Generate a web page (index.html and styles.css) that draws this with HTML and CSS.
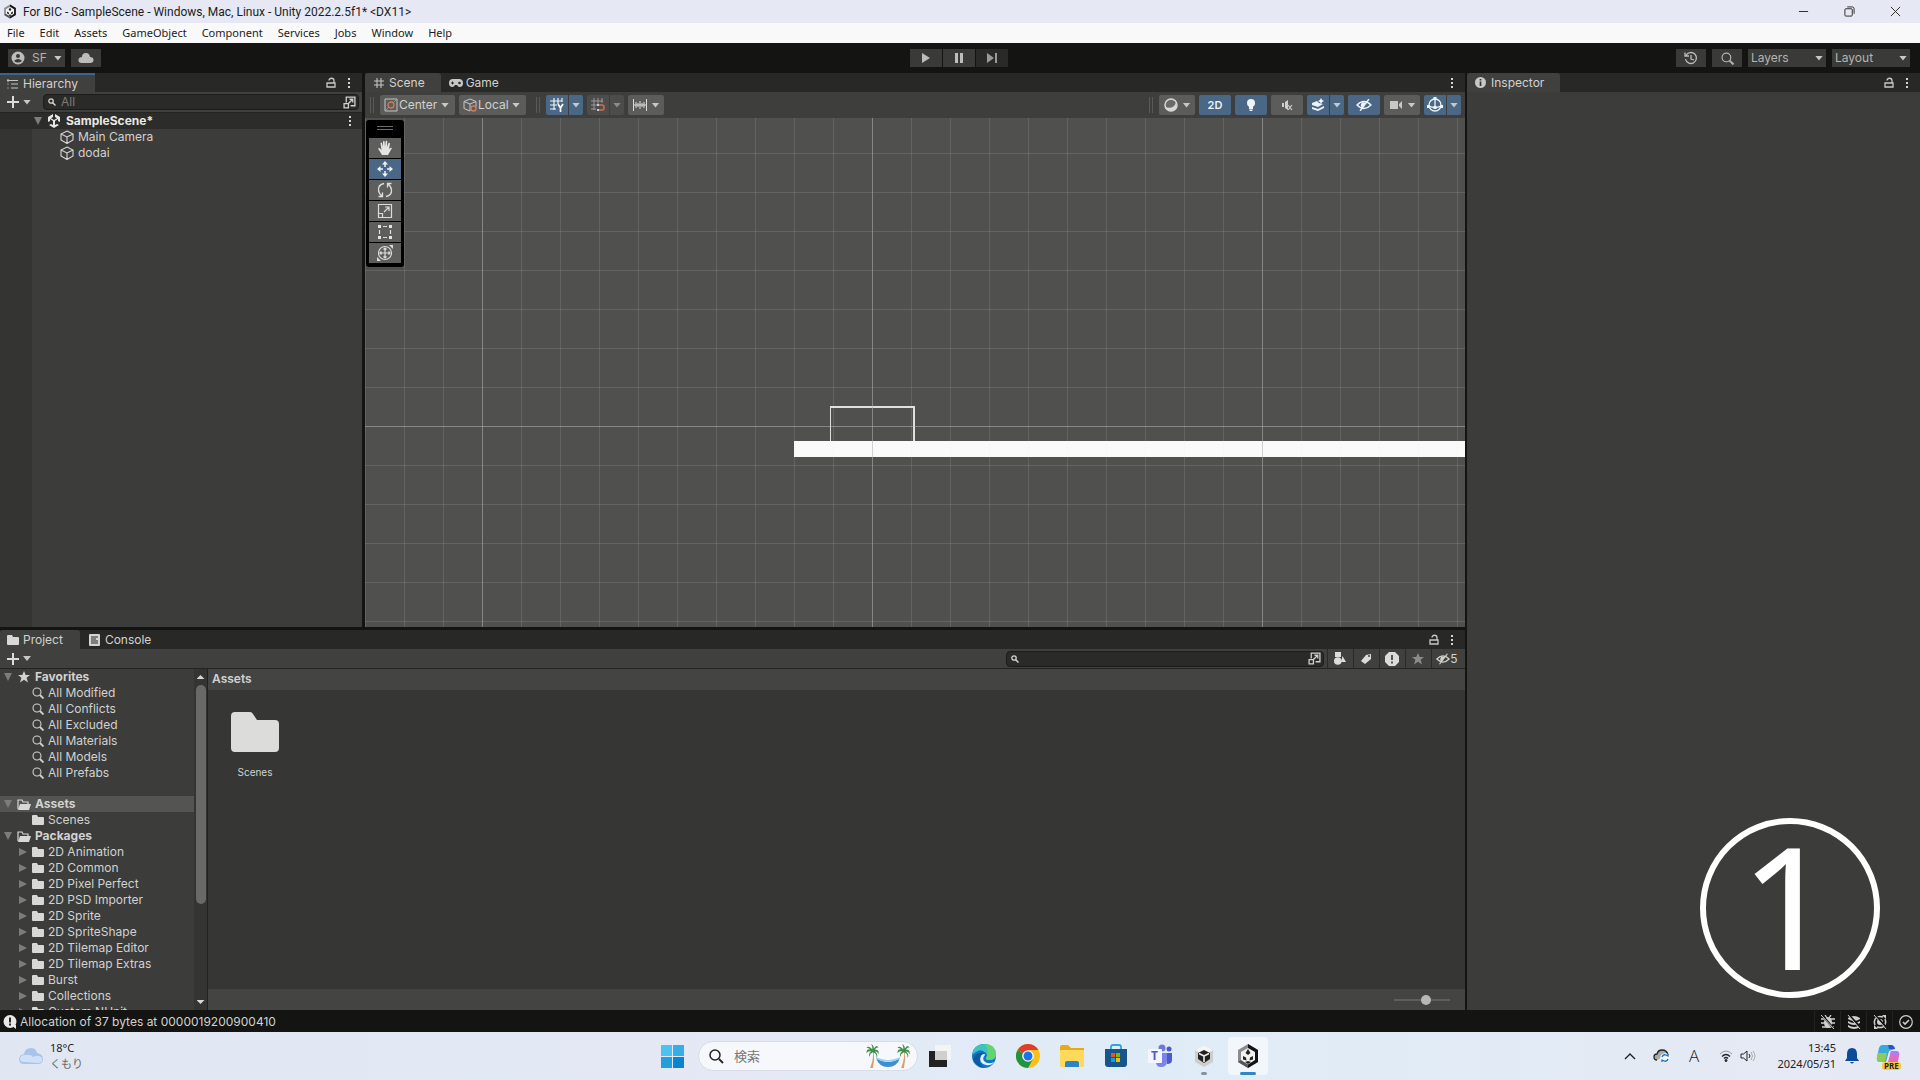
FILE: index.html
```html
<!DOCTYPE html>
<html lang="en">
<head>
  <meta charset="UTF-8">
  <meta name="viewport" content="width=device-width, initial-scale=1.0">
  <title>For BIC - SampleScene - Unity</title>
  <link rel="stylesheet" href="styles.css">
</head>
<body>
  <!-- Shared icons -->
  <svg class="sprite" aria-hidden="true">
    <symbol id="unity" viewBox="0 0 24 24">
      <path d="M12 0 22 6v12l-10 6L2 18V6z" fill="#8c8c8c"/>
      <path d="M12 0 22 6v12l-10 6z" fill="#141414"/>
      <path d="m2 18 3-2 7 4v4z" fill="#555"/>
      <path d="m12 4 7 4v8l-7 4.500L5 16V8z" fill="#f2f2f2"/>
      <path d="m12 5 2.500 4L12 11 9.500 9zM7 15.500V12l3 1.500.5 3zM17 15.500V12l-3 1.500-.5 3z" fill="#222"/>
      <path d="m9 18 3-1 3 1-3 2z" fill="#222"/>
    </symbol>
    <symbol id="unity-scene" viewBox="0 0 14 14">
      <path d="M6 0v3L4 4.200l3 1.800 3-1.800L8 3V0l5 3v5l-2-1V5L8 7v4l2-1 2 1-5 3-5-3 2-1 2 1V7L3 5v2L1 8V3z" fill="#e8e8e8"/>
    </symbol>
    <symbol id="cube" viewBox="0 0 14 14">
      <path d="m7 1 6 3v6l-6 3.500L1 10V4zM1 4l6 3 6-3M7 7v6" fill="none" stroke="#d8d8d8" stroke-width="1.100"/>
    </symbol>
    <symbol id="lock" viewBox="0 0 12 12">
      <path d="M2 6h8v4H2zM4 3.500C4 .5 9 .5 9 3.500V6" fill="none" stroke="#c8c8c8" stroke-width="1.300"/>
    </symbol>
    <symbol id="dots" viewBox="0 0 4 12">
      <path d="M1 1h2v2H1zM1 5h2v2H1zM1 9h2v2H1z" fill="#d4d4d4"/>
    </symbol>
    <symbol id="plus" viewBox="0 0 12 12">
      <path d="M6 0v12M0 6h12" stroke="#dcdcdc" stroke-width="2"/>
    </symbol>
    <symbol id="popout" viewBox="0 0 12 12">
      <path d="M3 6V1h8v8H7M1 7h4v4H1zM5 7l4-4M6 3h3v3" fill="none" stroke="#d0d0d0" stroke-width="1.200"/>
    </symbol>
    <symbol id="search" viewBox="0 0 12 12">
      <circle cx="5" cy="5" r="4" fill="none" stroke="currentColor" stroke-width="1.100"/>
      <path d="m8 8 3.500 3.500" stroke="currentColor" stroke-width="1.800"/>
    </symbol>
    <symbol id="search-bold" viewBox="0 0 8 8">
      <circle cx="3" cy="3" r="2.200" fill="none" stroke="currentColor" stroke-width="1.300"/>
      <path d="m4.500 4.500 3 3" stroke="currentColor" stroke-width="1.500"/>
    </symbol>
    <symbol id="folder" viewBox="0 0 12 10">
      <path d="M0 1q0-1 1-1h4l1 2h5q1 0 1 1v6q0 1-1 1H1q-1 0-1-1z" fill="#d8d8d6"/>
    </symbol>
    <symbol id="folder-open" viewBox="0 0 14 11">
      <path d="M1 10V1h4l1 2h5v2" fill="none" stroke="#d8d8d6" stroke-width="1.200"/>
      <path d="M3 5h11l-2 6H1z" fill="#d8d8d6"/>
    </symbol>
    <symbol id="star" viewBox="0 0 12 12">
      <path d="m6 0 1.700 4H12L8.600 6.800 10 11.500 6 8.800 2 11.500l1.400-4.700L0 4h4.300z" fill="currentColor"/>
    </symbol>
    <symbol id="eye-off" viewBox="0 0 16 12">
      <path d="M1 6q7-7 14 0-7 7-14 0z" fill="none" stroke="currentColor" stroke-width="1.400"/>
      <path d="M5 5q1-3 5-1L6 9Q4 7 5 5z" fill="currentColor"/>
      <path d="M13 0 4 12" stroke="currentColor" stroke-width="1.400"/>
    </symbol>
    <symbol id="palm" viewBox="0 0 14 28">
      <path d="M8 9q1 8-3 18h3q2-8 1-18z" fill="#d9a066"/>
      <path d="M8 8Q4 2 1 5q3 0 4 2-4-1-4 4 2-3 5-2-3 2-2 6 1-4 4-5 4 1 4 6 2-4-2-7 3 0 4 3 1-5-4-5 2-3 4-2-2-4-5 1 0-4-3-5 2 3 1 7z" fill="#3f8f4a"/>
    </symbol>
  </svg>

  <header class="titlebar">
    <svg class="app-icon"><use href="#unity"/></svg>
    <h1 class="title">For BIC - SampleScene - Windows, Mac, Linux - Unity 2022.2.5f1* &lt;DX11&gt;</h1>
    <div class="window-buttons">
      <button aria-label="Minimize"><svg viewBox="0 0 12 12"><path d="M1 6h10"/></svg></button>
      <button aria-label="Restore"><svg viewBox="0 0 12 12"><rect x="1" y="3" width="8" height="8" rx="1"/><path d="M3.500 1H9q2 0 2 2v5.500"/></svg></button>
      <button aria-label="Close"><svg viewBox="0 0 12 12"><path d="m1 1 10 10M11 1 1 11"/></svg></button>
    </div>
  </header>

  <nav class="menubar">
    <button>File</button>
    <button>Edit</button>
    <button>Assets</button>
    <button>GameObject</button>
    <button>Component</button>
    <button>Services</button>
    <button>Jobs</button>
    <button>Window</button>
    <button>Help</button>
  </nav>

  <div class="toolbar">
    <div class="toolbar-side">
      <button class="tb-btn account">
        <svg width="14" height="14" viewBox="0 0 14 14"><circle cx="7" cy="7" r="6.500" fill="#bdbdbd"/><circle cx="7" cy="5" r="2" fill="#3a3a38"/><path d="M3 10q4-4 8 0-4 3-8 0z" fill="#3a3a38"/></svg>
        SF
        <i class="caret"></i>
      </button>
      <button class="tb-btn" aria-label="Cloud">
        <svg width="16" height="12" viewBox="0 0 16 12"><path d="M4 11Q0 11 .5 7.500 1 5 4 5q0-4 4-4 3.500 0 4 4 3.500 0 3.500 3T12 11z" fill="#bdbdbd"/></svg>
      </button>
    </div>
    <div class="play-controls">
      <button aria-label="Play"><svg width="12" height="12" viewBox="0 0 12 12"><path d="M2 1v10l8-5z" fill="#bdbdbd"/></svg></button>
      <button aria-label="Pause"><svg width="12" height="12" viewBox="0 0 12 12"><path d="M2 1h3v10H2zM7 1h3v10H7z" fill="#bdbdbd"/></svg></button>
      <button class="dim" aria-label="Step"><svg width="12" height="12" viewBox="0 0 12 12"><path d="M1 1v10l7-5zM9 1h2v10H9z" fill="#9a9a9a"/></svg></button>
    </div>
    <div class="toolbar-side end">
      <button class="tb-btn" aria-label="Undo history">
        <svg width="14" height="14" viewBox="0 0 14 14" fill="none" stroke="#bdbdbd" stroke-width="1.300"><path d="M2 4.500A5.500 5.500 0 1 1 1.500 8M1 1.500V5h4M7 4v4l3 1"/></svg>
      </button>
      <button class="tb-btn" aria-label="Search"><svg width="13" height="13"><use href="#search"/></svg></button>
      <label class="select tb-select"><select aria-label="Layers"><option>Layers</option></select><i class="caret"></i></label>
      <label class="select tb-select"><select aria-label="Layout"><option>Layout</option></select><i class="caret"></i></label>
    </div>
  </div>

  <main class="editor">
    <div class="left-dock">

      <section class="panel hierarchy">
        <div class="tabs">
          <button class="tab active focused">
            <svg width="12" height="10" viewBox="0 0 12 10"><path d="M1 0v3M0 1.500h11M4 5h7M4 9h7M1 4.500v1M1 8.500v1" stroke="#c4c4c4" stroke-width="1.100" fill="none"/></svg>
            Hierarchy
          </button>
          <div class="tab-tools">
            <svg width="12" height="12"><use href="#lock"/></svg>
            <svg width="4" height="12"><use href="#dots"/></svg>
          </div>
        </div>
        <div class="bar">
          <button class="add" aria-label="Create"><svg width="12" height="12"><use href="#plus"/></svg><i class="caret"></i></button>
          <label class="search-box wide">
            <svg width="8" height="8"><use href="#search-bold"/></svg>
            <input type="text" placeholder="All" aria-label="Search hierarchy">
            <svg width="13" height="13"><use href="#popout"/></svg>
          </label>
        </div>
        <div class="scene-tree">
          <div class="row scene-row">
            <i class="fold open"></i>
            <svg width="14" height="14"><use href="#unity-scene"/></svg>
            <b>SampleScene*</b>
            <svg class="push" width="4" height="12"><use href="#dots"/></svg>
          </div>
          <div class="objects">
            <div class="row"><svg width="14" height="14"><use href="#cube"/></svg>Main Camera</div>
            <div class="row"><svg width="14" height="14"><use href="#cube"/></svg>dodai</div>
          </div>
        </div>
      </section>

      <section class="panel scene">
        <div class="tabs">
          <button class="tab active">
            <svg width="12" height="12" viewBox="0 0 12 12"><path d="M4 1v10M8 1v10M1 4h10M1 8h10" stroke="#c4c4c4" stroke-width="1.100"/></svg>
            Scene
          </button>
          <button class="tab">
            <svg width="14" height="8" viewBox="0 0 14 8"><path d="M4 0h6q4 0 4 4t-3.500 4Q9 8 8 6H6Q5 8 3.500 8 0 8 0 4t4-4z" fill="#c8c8c8"/><path d="M2 4h3M3.500 2.500v3" stroke="#282826"/><circle cx="10.500" cy="4" r="1.300" fill="#282826"/></svg>
            Game
          </button>
          <div class="tab-tools"><svg width="4" height="12"><use href="#dots"/></svg></div>
        </div>
        <div class="scene-bar">
          <i class="grip"></i>
          <label class="select tool-select">
            <svg width="14" height="14" viewBox="0 0 14 14" fill="none"><path d="M1 1h12v12H1z" stroke="#c4c4c4"/><circle cx="7" cy="7" r="3" stroke="#d07a5c" stroke-width="1.300"/><path d="m2 12 3-3M9 5l3-3" stroke="#d07a5c"/></svg>
            <select aria-label="Pivot"><option>Center</option></select><i class="caret"></i>
          </label>
          <label class="select tool-select">
            <svg width="14" height="14" viewBox="0 0 14 14" fill="none"><path d="m7 1 6 2.500V9M7 13 1 10.500v-7L7 1M1 3.500 7 6l6-2.500M7 6v7" stroke="#c8c8c8"/><circle cx="10.500" cy="10.500" r="2.500" stroke="#d07a5c" stroke-width="1.400"/></svg>
            <select aria-label="Orientation"><option>Local</option></select><i class="caret"></i>
          </label>
          <i class="grip later"></i>
          <div class="split on">
            <button aria-label="Grid"><svg width="14" height="14" viewBox="0 0 14 14"><path d="M4 0v12M8 0v6M0 3h12M0 7h7M0 11h6M12 0v4" stroke="#eef3f8" stroke-width="1.200"/><path d="m8 6 2.500 4L13 6M10.500 9v5" stroke="#fff" stroke-width="1.700" fill="none"/></svg></button>
            <button aria-label="Grid options"><i class="caret"></i></button>
          </div>
          <div class="split off">
            <button aria-label="Snap"><svg width="14" height="14" viewBox="0 0 14 14"><path d="M3 0v12M7 0v6M11 0v5M0 3h12M0 7h6M0 11h5" stroke="#999"/><path d="M8 7h3q2 0 2 2.500T11 12H8" stroke="#b5664e" stroke-width="2" fill="none"/><path d="M6 6h2v2H6zM6 11h2v2H6z" fill="#ccc"/></svg></button>
            <button aria-label="Snap options"><i class="caret"></i></button>
          </div>
          <button class="tool" aria-label="Snap increment">
            <svg width="14" height="14" viewBox="0 0 14 14"><path d="M.5 1v12M13.500 1v12M3 4v6M5 5v4M7 3v8M9 5v4M11 4v6M0 7h14" stroke="#dadada"/></svg>
            <i class="caret"></i>
          </button>

          <i class="grip push"></i>
          <button class="tool" aria-label="Draw mode">
            <svg width="14" height="14" viewBox="0 0 14 14"><circle cx="7" cy="7" r="6" fill="#6a6a68" stroke="#d8d8d8" stroke-width="1.500"/><path d="M12 4q2 8-5 9-4 0-6-4 9 3 11-5z" fill="#d8d8d8"/></svg>
            <i class="caret"></i>
          </button>
          <button class="tool square on">2D</button>
          <button class="tool square on" aria-label="Lighting"><svg width="12" height="14" viewBox="0 0 12 14"><circle cx="6" cy="5" r="4" fill="#eef3f8"/><path d="M4 8h4v3H4zM4.500 11.500h3V13h-3z" fill="#eef3f8"/></svg></button>
          <button class="tool square" aria-label="Audio"><svg width="14" height="12" viewBox="0 0 14 12"><path d="M2 4h2v4H2zM5 3l3-2v10L5 9z" fill="#d0d0d0"/><path d="m8 6 4 5M12 6l-4 5" stroke="#d0d0d0" stroke-width="1.200"/></svg></button>
          <div class="split on">
            <button aria-label="Effects"><svg width="14" height="14" viewBox="0 0 14 14"><path d="m1 5 5-2 2 2 4 1-5 3-6-2zM1 9l6 2 6-3v2l-6 3-6-2z" fill="#eef3f8"/><path d="m10 0 1 2 2 1-2 1-1 2-1-2-2-1 2-1z" fill="#fff"/></svg></button>
            <button aria-label="Effects options"><i class="caret"></i></button>
          </div>
          <button class="tool square on" aria-label="Scene visibility"><svg width="16" height="12"><use href="#eye-off"/></svg></button>
          <button class="tool" aria-label="Camera"><svg width="14" height="10" viewBox="0 0 14 10"><path d="M1 1h8v8H1zM10 4l3-3v8l-3-3z" fill="#c8c8c8"/></svg><i class="caret"></i></button>
          <div class="split on">
            <button aria-label="Gizmos"><svg width="16" height="16" viewBox="0 0 16 16" fill="none" stroke="#eef3f8" stroke-width="1.300"><circle cx="8" cy="8" r="6"/><path d="M8 1v9M2 9q6 3 12 0"/><path d="M6.500 0h3v3h-3zM0 8h3v3H0zM13 8h3v3h-3zM6.500 9h3v3h-3z" fill="#eef3f8" stroke="none"/></svg></button>
            <button aria-label="Gizmos options"><i class="caret"></i></button>
          </div>
        </div>

        <div class="canvas">
          <div class="camera-frame"></div>
          <div class="ground"></div>
          <div class="tools">
            <i class="tools-grip"></i>
            <button aria-label="View"><svg width="16" height="16" viewBox="0 0 16 16"><path d="M5 15 1 8.500q1-1 2 0l1.500 1.500L3.500 3Q4.500 2 5 3l1 4V1.500q1-1 1.600 0L8 7l.7-6q1-.8 1.500.3L10 7l1.500-4q1-.5 1.500.5L12 9q2-2 3-1l-4 7z" fill="#e4e4e4"/></svg></button>
            <button class="on" aria-label="Move"><svg width="16" height="16" viewBox="0 0 16 16"><path d="M8 2v4M8 10v4M2 8h4M10 8h4" stroke="#eef3f8" stroke-width="1.500"/><path d="m8 0 3 3.500H5zM8 16l3-3.500H5zM0 8l3.500-3v6zM16 8l-3.500-3v6z" fill="#eef3f8"/></svg></button>
            <button aria-label="Rotate"><svg width="16" height="16" viewBox="0 0 16 16" fill="none" stroke="#dcdcdc" stroke-width="1.300"><path d="M7 1.500Q1 3 1.500 8q0 3 3.500 6M9 14.500q6-1.500 5.500-6.500 0-3-3.500-6M1.500 14.500H5.500v-4M14.500 1.500h-4v4"/></svg></button>
            <button aria-label="Scale"><svg width="16" height="16" viewBox="0 0 16 16" fill="none" stroke="#dcdcdc" stroke-width="1.200"><path d="M1.500 1.500h13v13h-13zM1.500 10.500h4v4M7 9l5-5M8 4h4v4"/></svg></button>
            <button aria-label="Rect"><svg width="16" height="16" viewBox="0 0 16 16"><path d="M2.500 6v4M13.500 6v4M6 2.500h4M6 13.500h4" stroke="#dcdcdc" stroke-width="1.200"/><path d="M1 1h3v3H1zM12 1h3v3h-3zM1 12h3v3H1zM12 12h3v3h-3z" fill="#e4e4e4"/></svg></button>
            <button aria-label="Transform"><svg width="16" height="16" viewBox="0 0 16 16" fill="none" stroke="#dcdcdc" stroke-width="1.200"><circle cx="8" cy="8" r="6.500"/><path d="M8 3v10M3 8h10M6.500 4.500 8 3l1.500 1.500M6.500 11.500 8 13l1.500-1.500M4.500 6.500 3 8l1.500 1.500M11.500 6.500 13 8l-1.500 1.500"/><path d="M12 0h4v4zM0 12v4h4z" fill="#dcdcdc" stroke="none"/></svg></button>
          </div>
        </div>
      </section>

      <section class="panel project">
        <div class="tabs">
          <button class="tab active"><svg width="12" height="10"><use href="#folder"/></svg>Project</button>
          <button class="tab">
            <svg width="11" height="12" viewBox="0 0 11 12"><rect width="11" height="12" rx="1" fill="#d4d4d4"/><path d="M2 3h7M2 5h5M2 7h7M2 9h7" stroke="#282826"/></svg>
            Console
          </button>
          <div class="tab-tools">
            <svg width="12" height="12"><use href="#lock"/></svg>
            <svg width="4" height="12"><use href="#dots"/></svg>
          </div>
        </div>
        <div class="bar project-bar">
          <button class="add" aria-label="Create asset"><svg width="12" height="12"><use href="#plus"/></svg><i class="caret"></i></button>
          <label class="search-box push">
            <svg width="8" height="8"><use href="#search-bold"/></svg>
            <input type="text" aria-label="Search assets">
            <svg width="13" height="13"><use href="#popout"/></svg>
          </label>
          <div class="filters">
            <button aria-label="Search by type"><svg width="12" height="13" viewBox="0 0 12 13"><path d="M1 0h6v5H1zM8.500 4 12 10H7z" fill="#dcdcdc"/><circle cx="3.800" cy="9" r="3.800" fill="#dcdcdc"/></svg></button>
            <button aria-label="Search by label"><svg width="12" height="12" viewBox="0 0 12 12"><path d="m1 8 5-6 5-1v5l-6 5z" fill="#dcdcdc"/><circle cx="9" cy="3" r="1" fill="#444442"/></svg></button>
            <button aria-label="Import log"><svg width="14" height="14" viewBox="0 0 14 14"><path d="M4 0h6l4 4v6l-4 4H4l-4-4V4z" fill="#dcdcdc"/><path d="M7 3v5M7 9.500v2" stroke="#333" stroke-width="1.600"/></svg></button>
            <button class="star" aria-label="Save search"><svg width="12" height="12"><use href="#star"/></svg></button>
            <button class="hidden-count" aria-label="Hidden packages"><svg width="14" height="12"><use href="#eye-off"/></svg>5</button>
          </div>
        </div>
        <div class="project-body">
          <div class="folders">
            <div class="row"><i class="fold open"></i><svg class="fav" width="12" height="12"><use href="#star"/></svg><b>Favorites</b></div>
            <div class="row sub"><svg width="12" height="12"><use href="#search"/></svg>All Modified</div>
            <div class="row sub"><svg width="12" height="12"><use href="#search"/></svg>All Conflicts</div>
            <div class="row sub"><svg width="12" height="12"><use href="#search"/></svg>All Excluded</div>
            <div class="row sub"><svg width="12" height="12"><use href="#search"/></svg>All Materials</div>
            <div class="row sub"><svg width="12" height="12"><use href="#search"/></svg>All Models</div>
            <div class="row sub"><svg width="12" height="12"><use href="#search"/></svg>All Prefabs</div>
            <div class="row spacer"></div>
            <div class="row selected"><i class="fold open"></i><svg width="14" height="11"><use href="#folder-open"/></svg><b>Assets</b></div>
            <div class="row sub"><svg width="12" height="10"><use href="#folder"/></svg>Scenes</div>
            <div class="row"><i class="fold open"></i><svg width="14" height="11"><use href="#folder-open"/></svg><b>Packages</b></div>
            <div class="row pkg"><i class="fold"></i><svg width="12" height="10"><use href="#folder"/></svg>2D Animation</div>
            <div class="row pkg"><i class="fold"></i><svg width="12" height="10"><use href="#folder"/></svg>2D Common</div>
            <div class="row pkg"><i class="fold"></i><svg width="12" height="10"><use href="#folder"/></svg>2D Pixel Perfect</div>
            <div class="row pkg"><i class="fold"></i><svg width="12" height="10"><use href="#folder"/></svg>2D PSD Importer</div>
            <div class="row pkg"><i class="fold"></i><svg width="12" height="10"><use href="#folder"/></svg>2D Sprite</div>
            <div class="row pkg"><i class="fold"></i><svg width="12" height="10"><use href="#folder"/></svg>2D SpriteShape</div>
            <div class="row pkg"><i class="fold"></i><svg width="12" height="10"><use href="#folder"/></svg>2D Tilemap Editor</div>
            <div class="row pkg"><i class="fold"></i><svg width="12" height="10"><use href="#folder"/></svg>2D Tilemap Extras</div>
            <div class="row pkg"><i class="fold"></i><svg width="12" height="10"><use href="#folder"/></svg>Burst</div>
            <div class="row pkg"><i class="fold"></i><svg width="12" height="10"><use href="#folder"/></svg>Collections</div>
            <div class="row pkg"><i class="fold"></i><svg width="12" height="10"><use href="#folder"/></svg>Custom NUnit</div>
          </div>
          <div class="scrollbar">
            <i class="arrow up"></i>
            <div class="track"><div class="thumb"></div></div>
            <i class="arrow"></i>
          </div>
          <div class="assets">
            <div class="breadcrumb">Assets</div>
            <div class="grid">
              <div class="asset">
                <svg width="48" height="40" viewBox="0 0 48 40"><path d="M0 4q0-4 4-4h15q2 0 3 2l4 6h18q4 0 4 4v24q0 4-4 4H4q-4 0-4-4z" fill="#dcdcda"/></svg>
                <span>Scenes</span>
              </div>
            </div>
            <div class="zoom-bar"><input type="range" class="zoom" min="0" max="100" value="58" aria-label="Icon size"></div>
          </div>
        </div>
      </section>
    </div>

    <section class="panel inspector">
      <div class="tabs">
        <button class="tab active">
          <svg width="11" height="11" viewBox="0 0 11 11"><circle cx="5.500" cy="5.500" r="5.500" fill="#c8c8c8"/><path d="M5.500 2v1.500M5.500 4.500V9" stroke="#333" stroke-width="1.700"/></svg>
          Inspector
        </button>
        <div class="tab-tools">
          <svg width="12" height="12"><use href="#lock"/></svg>
          <svg width="4" height="12"><use href="#dots"/></svg>
        </div>
      </div>
      <div class="step-number">1</div>
    </section>
  </main>

  <div class="status">
    <svg width="14" height="14" viewBox="0 0 14 14"><circle cx="7" cy="6.500" r="6.500" fill="#e8e8e8"/><path d="M8 10h5v4z" fill="#e8e8e8"/><path d="M7 2.500v5M7 8.500v2" stroke="#141412" stroke-width="1.800"/></svg>
    <span>Allocation of 37 bytes at 0000019200900410</span>
    <div class="status-icons">
      <button aria-label="Debugger"><svg width="14" height="14" viewBox="0 0 14 14"><ellipse cx="7" cy="7.500" rx="4" ry="5.500" fill="#cfcfcf"/><path d="M0 4h14M0 8h14M1 12h12M4 0l2 3M10 0 8 3" stroke="#cfcfcf" stroke-width="1.300"/><path d="m1 0 12 14" stroke="#141412" stroke-width="2"/><path d="m0 0 13 14" stroke="#cfcfcf"/></svg></button>
      <button aria-label="Cache server"><svg width="14" height="14" viewBox="0 0 14 14"><path d="M1 3q6-4 12 0v1q-6 4-12 0zM1 6q6 4 12 0v2q-6 4-12 0zM1 10q6 4 12 0v2q-6 4-12 0z" fill="#cfcfcf"/><path d="m2 0 12 13" stroke="#141412" stroke-width="2"/><path d="m1 0 12 14" stroke="#cfcfcf"/></svg></button>
      <button aria-label="Auto refresh"><svg width="14" height="14" viewBox="0 0 14 14"><path d="M2 10Q0 5 4 2q3-1 6 0M12 4q2 5-2 8-3 1-6 0" fill="none" stroke="#cfcfcf" stroke-width="1.500"/><path d="M9 0h4v4zM1 10v4h4z" fill="#cfcfcf"/><circle cx="7" cy="7" r="3" fill="#cfcfcf"/><path d="m2 0 12 13" stroke="#141412" stroke-width="2"/><path d="m1 0 12 14" stroke="#cfcfcf"/></svg></button>
      <button aria-label="Progress"><svg width="14" height="14" viewBox="0 0 14 14" fill="none" stroke="#cfcfcf" stroke-width="1.200"><circle cx="7" cy="7" r="6.300"/><path d="m4 7 2 2 4-4" stroke-width="1.600"/></svg></button>
    </div>
  </div>

  <footer class="taskbar">
    <button class="weather">
      <svg width="26" height="18" viewBox="0 0 26 18"><path d="M6 17q-5 0-5-5 0-4 5-5 1-6 7-6 5 0 6 5 6 1 6 6t-5 5z" fill="#a9c4ea"/><path d="M6 15q-4 0-4-3.500T7 8q6-1 8 2 6-3 9 1 1 5-4 5z" fill="#cfe0f7"/></svg>
      <span>18°C<small>くもり</small></span>
    </button>

    <div class="apps">
      <button aria-label="Start"><svg width="23" height="23" viewBox="0 0 23 23"><path d="M0 0h11v11H0z" fill="#4cc2f1"/><path d="M12 0h11v11H12z" fill="#35aee8"/><path d="M0 12h11v11H0z" fill="#219fdf"/><path d="M12 12h11v11H12z" fill="#0b84cf"/></svg></button>
      <label class="task-search">
        <svg width="15" height="15" viewBox="0 0 15 15"><circle cx="6" cy="6" r="5" fill="none" stroke="#222" stroke-width="1.500"/><path d="m10 10 4 4" stroke="#222" stroke-width="1.800"/></svg>
        <input type="text" placeholder="検索" aria-label="検索">
        <svg width="46" height="26" viewBox="0 0 46 26"><use href="#palm" width="14" height="26"/><use href="#palm" x="31" width="14" height="26"/><path d="M11 15q12 8 24 0-3 9-12 9t-12-9z" fill="#3d8fcf"/><path d="M11 15q12 6 24 0" fill="none" stroke="#9fd0f0" stroke-width="1.500"/></svg>
      </label>
      <button aria-label="Task view"><svg width="24" height="24" viewBox="0 0 24 24"><path d="M1 7h18v16H1z" fill="#222"/><path d="M7 1h16v15H7z" fill="#f4f4f4"/><path d="M7 7h12v9H7z" fill="#cfcfcf"/></svg></button>
      <button aria-label="Edge"><svg width="24" height="24" viewBox="0 0 24 24"><circle cx="12" cy="12" r="12" fill="#1473c4"/><path d="M0 11Q2 0 12 0q11 0 12 10 0 6-7 6-3 0-3-2 2-2 0-5-5-5-10-1-3 2-4 3z" fill="#3cc5c0"/><path d="M13 0q10 0 11 10 0 6-7 6-3 0-3-2 4-7-1-14z" fill="#62d470"/><path d="M9 11q-3 8 5 10 5 1 8-3-6 3-10-1-2-3 1-6 0-2-4 0z" fill="#dff2ff"/><path d="M1 15q3 8 11 9-5-4-4-10 1-4 5-5-8-2-12 6z" fill="#0c59a4"/></svg></button>
      <button aria-label="Chrome"><svg width="24" height="24" viewBox="0 0 24 24"><circle cx="12" cy="12" r="12" fill="#fbc116"/><path d="M12 12 1.600 6A12 12 0 0 1 22.400 6H12z" fill="#e33b2e"/><path d="M12 12 1.600 6A12 12 0 0 0 12 24l5-9z" fill="#229342"/><circle cx="12" cy="12" r="5.800" fill="#fff"/><circle cx="12" cy="12" r="4.500" fill="#1a73e8"/></svg></button>
      <button aria-label="Explorer"><svg width="24" height="22" viewBox="0 0 24 22"><path d="M0 2q0-2 2-2h6l3 3h13v18H0z" fill="#e8a91c"/><path d="M1 5h22q1 0 1 1v14q0 2-2 2H2q-2 0-2-2V6z" fill="#ffd95c"/><path d="M5 22v-4q0-2 2-2h10q2 0 2 2v4z" fill="#2c83cc"/></svg></button>
      <button aria-label="Store"><svg width="24" height="24" viewBox="0 0 24 24"><path d="M7 6V3q0-2 2-2h6q2 0 2 2v3" fill="none" stroke="#2aa7dd" stroke-width="1.800"/><path d="M1 5h22v15q0 3-3 3H4q-3 0-3-3z" fill="#17558c"/><path d="M7 9h4v4H7z" fill="#f25022"/><path d="M12 9h4v4h-4z" fill="#7fba00"/><path d="M7 14h4v4H7z" fill="#00a4ef"/><path d="M12 14h4v4h-4z" fill="#ffb900"/></svg></button>
      <button aria-label="Teams"><svg width="24" height="24" viewBox="0 0 24 24"><circle cx="14" cy="4" r="3.500" fill="#6f78d6"/><circle cx="21" cy="5" r="2.500" fill="#5059c9"/><path d="M9 9h10v8q0 6-6 6-5 0-5-5z" fill="#7b83eb"/><path d="M19 9h5v7q0 4-5 4z" fill="#5059c9"/><rect y="5" width="14" height="14" rx="1" fill="#f4f5ff"/><text x="3" y="16" class="teams-t">T</text></svg></button>
      <button class="running" aria-label="Unity Hub"><svg width="24" height="24" viewBox="0 0 24 24"><path d="m12 1 9 5v12l-9 5-9-5V6z" fill="#cdcdcd"/><path d="m12 1 9 5-9 6-9-6z" fill="#f4f4f4"/><path d="m12 6 6 3v6l-6 4-6-4V9z" fill="#222"/><path d="m12 12-5-2.500M12 12l5-2.500M12 12v6" stroke="#eee" stroke-width="1.600"/></svg></button>
      <button class="running active" aria-label="Unity"><svg width="24" height="24"><use href="#unity"/></svg></button>
    </div>

    <div class="tray">
      <button aria-label="Show hidden icons"><svg width="12" height="8" viewBox="0 0 12 8"><path d="m1 7 5-5 5 5" fill="none" stroke="#222" stroke-width="1.400"/></svg></button>
      <button aria-label="OneDrive"><svg width="18" height="14" viewBox="0 0 18 14"><path d="M4 11Q1 11 1 8q0-3 3-3 1-4 5-4 5 0 6 5" fill="#aaa" stroke="#222" stroke-width="1.300"/><circle cx="12" cy="9" r="4.800" fill="#f2f5fa"/><path d="M9 8q1-3 4-2l2 1V5M15 10q-1 3-4 2l-2-1v2" fill="none" stroke="#1473c4" stroke-width="1.300"/></svg></button>
      <button class="ime">A</button>
      <button class="net" aria-label="Network and volume">
        <svg width="14" height="12" viewBox="0 0 14 12" fill="none" stroke="#222"><path d="M1 4q6-6 12 0" stroke="#999"/><path d="M3 6.500q4-4 8 0M5 8.500q2-2 4 0" stroke-width="1.300"/><circle cx="7" cy="10.500" r="1" fill="#222"/></svg>
        <svg width="16" height="12" viewBox="0 0 16 12" fill="none" stroke="#222"><path d="M1 4h2.500L7 1v10L3.500 8H1zM9 4q2 2 0 4"/><path d="M11 2q3 4 0 8M13 1q4 5 0 10" stroke="#aaa"/></svg>
      </button>
      <button class="clock">13:45<br>2024/05/31</button>
      <button aria-label="Notifications"><svg width="14" height="16" viewBox="0 0 14 16"><path d="M7 0q5 0 5 6v4l2 3H0l2-3V6q0-6 5-6zM5 14h4q-2 3-4 0z" fill="#0b4a9c"/></svg></button>
      <button class="copilot" aria-label="Copilot">
        <svg width="24" height="24" viewBox="0 0 24 24"><path d="M6 1h9q3 0 4 4l-6 2-3 11H4Q0 18 1 13L3 4q1-3 3-3z" fill="#3aa9d8"/><path d="M2 9h9l-2 9H4q-4 0-3-5z" fill="#8ecb5a"/><path d="M12 1h3q3 0 4 4h-6z" fill="#2a55c8"/><path d="M15 7h5q4 0 3 5l-1 5q-1 4-4 4H9l3-3z" fill="#e56bc0"/><path d="M15 7h5q4 0 3 5h-9z" fill="#b57bf0"/></svg>
        <span class="badge">PRE</span>
      </button>
    </div>
  </footer>
</body>
</html>
```
FILE: styles.css
```css
/* Base */
* {
  box-sizing: border-box;
}

body {
  margin: 0;
  height: 100vh;
  display: flex;
  flex-direction: column;
  overflow: hidden;
  background: #141412;
  color: #d2d2d0;
  font-family: Inter, "Noto Sans CJK JP", sans-serif;
  font-size: 12px;
  line-height: 16px;
}

button,
input,
select {
  margin: 0;
  padding: 0;
  border: 0;
  background: none;
  color: inherit;
  font: inherit;
}

button {
  display: flex;
  align-items: center;
  justify-content: center;
}

input:focus,
select:focus {
  outline: none;
}

svg {
  flex: none;
  display: block;
}

.sprite {
  position: absolute;
  width: 0;
  height: 0;
}

.push {
  margin-left: auto;
}

/* Triangles */
.caret {
  flex: none;
  width: 8px;
  height: 5px;
  background: #c8c8c8;
  clip-path: polygon(0 0, 100% 0, 50% 100%);
}

.fold {
  flex: none;
  width: 8px;
  height: 8px;
  background: #7c7c7a;
  clip-path: polygon(0 0, 100% 50%, 0 100%);
}

.fold.open {
  clip-path: polygon(0 0, 100% 0, 50% 100%);
}

/* Title bar and menu */
.titlebar {
  flex: none;
  display: flex;
  align-items: center;
  height: 23px;
  padding: 0 2px 0 3px;
  background: #e6e9f3;
  color: #1c1c1c;
}

.app-icon {
  width: 14px;
  height: 15px;
}

.title {
  margin: 0 0 0 6px;
  font-family: Roboto, sans-serif;
  font-size: 12px;
  font-weight: 400;
}

.window-buttons {
  display: flex;
  margin-left: auto;
}

.window-buttons button {
  width: 46px;
  height: 20px;
}

.window-buttons svg {
  width: 11px;
  height: 11px;
  fill: none;
  stroke: #222;
}

.menubar {
  flex: none;
  display: flex;
  gap: 1px;
  height: 20px;
  background: #f9f9f9;
  color: #1c1c1c;
  font-family: "Noto Sans", sans-serif;
  font-size: 11px;
}

.menubar button {
  padding: 0 7px;
}

/* Main toolbar */
.toolbar {
  flex: none;
  display: grid;
  grid-template-columns: 1fr auto 1fr;
  align-items: center;
  height: 30px;
  padding: 0 10px 0 8px;
  color: #b4b4b2;
}

.toolbar-side {
  display: flex;
  gap: 6px;
}

.toolbar-side.end {
  justify-content: flex-end;
}

.tb-btn {
  width: 30px;
  height: 18px;
  background: #3a3a38;
}

.tb-btn.account {
  width: 57px;
  gap: 7px;
}

.play-controls {
  display: flex;
  gap: 1px;
}

.play-controls button {
  width: 32px;
  height: 18px;
  background: #3a3a38;
}

.play-controls .dim {
  background: #2a2a28;
}

.select {
  display: flex;
  align-items: center;
}

.select select {
  flex: 1;
  min-width: 0;
  appearance: none;
}

.tb-select {
  width: 78px;
  height: 18px;
  padding: 0 3px;
  background: #3a3a38;
}

/* Docks */
.editor {
  flex: 1;
  min-height: 0;
  display: grid;
  grid-template-columns: minmax(0, 1fr) 453px;
  gap: 2px;
}

.left-dock {
  min-height: 0;
  display: grid;
  grid-template-columns: 362px minmax(0, 1fr);
  grid-template-rows: minmax(0, 1fr) 380px;
  gap: 3px;
}

.panel {
  display: flex;
  flex-direction: column;
  min-height: 0;
  background: #3c3c3a;
}

.project {
  grid-column: 1 / 3;
}

.tabs {
  flex: none;
  display: flex;
  height: 19px;
  background: #282826;
}

.tab {
  gap: 4px;
  padding: 0 12px 0 7px;
}

.scene .tab,
.inspector .tab {
  padding: 0 16px 0 8px;
}

.inspector .tab {
  gap: 5px;
}

.scene .tab + .tab {
  gap: 3px;
}

.project .tab {
  padding: 0 17px 0 7px;
}

.project .tab + .tab {
  padding-left: 9px;
  gap: 5px;
}

.tab.active {
  background: #40403e;
  border-radius: 3px 3px 0 0;
}

.tab.focused {
  width: 95px;
  justify-content: flex-start;
  border-top: 2px solid #3c6390;
  border-radius: 0;
}

.tab-tools {
  display: flex;
  align-items: center;
  gap: 10px;
  margin-left: auto;
  padding-right: 11px;
}

.bar {
  flex: none;
  display: flex;
  align-items: center;
  height: 21px;
  padding: 0 3px 0 7px;
  background: #40403e;
  border-bottom: 1px solid #242422;
}

.add {
  gap: 4px;
  margin-right: 12px;
}

.search-box {
  display: flex;
  align-items: center;
  gap: 5px;
  width: 318px;
  height: 16px;
  padding: 0 2px 0 4px;
  background: #2a2a28;
  border: 1px solid #1c1c1a;
  border-radius: 4px;
}

.search-box.wide {
  flex: 1;
  width: auto;
}

.search-box input {
  flex: 1;
  min-width: 0;
}

.search-box input::placeholder {
  color: #7c7c7a;
  opacity: 1;
}

/* Tree rows */
.row {
  display: flex;
  align-items: center;
  gap: 4px;
  height: 16px;
  white-space: nowrap;
}

.scene-tree {
  flex: 1;
  background: linear-gradient(90deg, #343432 32px, #3c3c3a 32px);
}

.scene-row {
  padding: 0 10px 0 34px;
  gap: 5px;
  background: #2c2c2a;
  color: #e8e8e6;
}

.objects .row {
  padding-left: 60px;
}

/* Scene view */
.scene-bar {
  flex: none;
  display: flex;
  align-items: center;
  gap: 4px;
  height: 26px;
  padding: 0 4px 0 5px;
  background: #3e3e3c;
}

.grip {
  width: 4px;
  height: 16px;
  margin-right: 2px;
  border: 1px solid #5a5a58;
  border-width: 0 1px;
}

.grip.later {
  margin-left: 6px;
}

.tool-select {
  width: 75px;
  height: 20px;
  padding: 0 6px 0 4px;
  gap: 1px;
  background: #5c5c5a;
  border-radius: 2px;
}

.tool-select + .tool-select {
  width: 67px;
}

.tool {
  gap: 5px;
  width: 36px;
  height: 20px;
  background: #5c5c5a;
  border-radius: 2px;
}

.tool.square {
  width: 32px;
}

.tool.on,
.split.on button {
  background: #4a6786;
  color: #eef3f8;
  font-size: 11px;
  font-weight: 600;
}

.split {
  display: flex;
  gap: 1px;
}

.split button {
  width: 14px;
  height: 20px;
  background: #4c4c4a;
  border-radius: 0 2px 2px 0;
}

.split button:first-child {
  width: 22px;
  border-radius: 2px 0 0 2px;
}

.split.off .caret {
  background: #8c8c8a;
}

.canvas {
  position: relative;
  flex: 1;
  overflow: hidden;
  background: #50504e;
}

/* Grid lines run over the sprites, with a stronger line every tenth cell */
.canvas::after {
  content: "";
  position: absolute;
  inset: 0;
  background:
    linear-gradient(90deg, rgba(170, 170, 170, 0.5) 1px, transparent 1px) 117px 0 / 390px 100%,
    linear-gradient(rgba(190, 190, 190, 0.4) 1px, transparent 1px) 0 308px / 100% 390px,
    linear-gradient(90deg, rgba(225, 225, 225, 0.13) 1px, transparent 1px) 0 0 / 39px 100%,
    linear-gradient(rgba(225, 225, 225, 0.13) 1px, transparent 1px) 0 35px / 100% 39px;
}

.camera-frame {
  position: absolute;
  left: 465px;
  top: 288px;
  width: 85px;
  height: 36px;
  border: 2px solid #e0e0de;
  border-left-width: 1px;
  border-bottom: 0;
}

.ground {
  position: absolute;
  left: 429px;
  right: 0;
  top: 323px;
  height: 16px;
  background: #fafafa;
}

.tools {
  position: absolute;
  z-index: 1;
  left: 1px;
  top: 2px;
  display: flex;
  flex-direction: column;
  align-items: center;
  gap: 1px;
  width: 38px;
  padding: 6px 3px 4px;
  background: #000;
  border-radius: 3px;
}

.tools-grip {
  width: 16px;
  height: 4px;
  margin-bottom: 7px;
  border: 1px solid #6c6c6a;
  border-width: 1px 0;
}

.tools button {
  width: 32px;
  height: 20px;
  background: #5e5e5c;
}

.tools .on {
  background: #4a6786;
}

/* Project panel */
.project-bar {
  height: 20px;
  padding: 0 1px 0 7px;
}

.filters {
  display: flex;
  align-self: stretch;
  margin-left: 3px;
}

.filters button {
  width: 26px;
  padding-right: 2px;
  border-left: 1px solid #2a2a28;
}

.filters .star {
  color: #8c8c8a;
}

.filters .hidden-count {
  width: 33px;
}

.project-body {
  flex: 1;
  min-height: 0;
  display: grid;
  grid-template-columns: 194px 14px minmax(0, 1fr);
}

.folders {
  overflow: hidden;
}

.folders .row {
  padding-left: 4px;
}

.folders .row.sub {
  padding-left: 32px;
}

.folders .row.pkg {
  padding-left: 19px;
}

.folders .row.spacer {
  height: 15px;
}

.folders .fold {
  margin-right: 1px;
}

.row.selected {
  background: #545452;
}

.fav {
  margin: 0 1px;
}

.scrollbar {
  display: flex;
  flex-direction: column;
  align-items: center;
  padding: 6px 0;
  background: #343432;
  border-right: 1px solid #222220;
}

.arrow {
  width: 8px;
  height: 4px;
  background: #d8d8d8;
  clip-path: polygon(0 0, 100% 0, 50% 100%);
}

.arrow.up {
  clip-path: polygon(50% 0, 100% 100%, 0 100%);
}

.track {
  flex: 1;
  width: 10px;
  margin: 6px 0;
}

.thumb {
  height: 71%;
  background: #696967;
  border-radius: 5px;
}

.assets {
  display: flex;
  flex-direction: column;
  background: #363634;
}

.breadcrumb {
  height: 21px;
  padding: 2px 4px;
  background: #444442;
  font-weight: 600;
}

.grid {
  flex: 1;
  display: flex;
  padding: 22px 12px;
}

.asset {
  display: flex;
  flex-direction: column;
  align-items: center;
  gap: 12px;
  width: 70px;
  font-size: 10px;
}

.zoom-bar {
  display: flex;
  align-items: center;
  justify-content: flex-end;
  height: 21px;
  padding-right: 15px;
  background: #444442;
}

.zoom {
  appearance: none;
  width: 56px;
  height: 12px;
  background: linear-gradient(#5e5e5c, #5e5e5c) center / 100% 2px no-repeat;
}

.zoom::-webkit-slider-thumb {
  appearance: none;
  width: 10px;
  height: 10px;
  background: #b8b8b6;
  border-radius: 50%;
}

/* Inspector with the big step number */
.step-number {
  display: flex;
  align-items: center;
  justify-content: center;
  width: 180px;
  height: 180px;
  margin: auto 40px 12px auto;
  padding: 0 4px 8px 0;
  border: 6px solid #fff;
  border-radius: 50%;
  color: #fff;
  font-family: "Noto Sans", sans-serif;
  font-size: 170px;
  line-height: 160px;
}

/* Status line */
.status {
  flex: none;
  display: flex;
  align-items: center;
  gap: 3px;
  height: 22px;
  padding: 1px 2px 0 3px;
}

.status-icons {
  display: flex;
  align-self: stretch;
  margin-left: auto;
}

.status-icons button {
  width: 26px;
  border-left: 1px solid #222220;
}

/* Taskbar */
.taskbar {
  flex: none;
  display: grid;
  grid-template-columns: 1fr auto 1fr;
  align-items: center;
  height: 48px;
  background: linear-gradient(90deg, #e0e7f2, #e4e9f5 40%, #dfecf7 60%, #e6e9f3);
  color: #222;
  font-family: "Noto Sans", "Noto Sans CJK JP", sans-serif;
  font-size: 11px;
}

.weather {
  justify-self: start;
  gap: 6px;
  padding: 0 0 0 18px;
  text-align: left;
}

.weather small {
  display: block;
  color: #666;
  font-size: 11px;
}

.apps {
  display: flex;
  align-items: center;
}

.apps button {
  width: 44px;
  height: 48px;
}

.task-search {
  display: flex;
  align-items: center;
  gap: 10px;
  width: 220px;
  height: 30px;
  margin-left: 4px;
  padding: 0 6px 0 10px;
  background: #f6f8fc;
  border: 1px solid #d8dce6;
  border-radius: 15px;
}

.task-search input {
  flex: 1;
  min-width: 0;
  font-size: 13px;
}

.task-search input::placeholder {
  color: #777;
  opacity: 1;
}

.teams-t {
  fill: #5059c9;
  font-size: 12px;
  font-weight: 700;
}

.running {
  position: relative;
}

.running::after {
  content: "";
  position: absolute;
  bottom: 5px;
  width: 6px;
  height: 3px;
  background: #8a929c;
  border-radius: 2px;
}

.apps .running.active {
  width: 40px;
  height: 38px;
  margin: 0 2px;
  background: #f3f7fb;
  border-radius: 4px;
}

.running.active::after {
  bottom: 0;
  width: 16px;
  background: #2f86c6;
}

.tray {
  display: flex;
  align-items: center;
  justify-self: end;
  padding-right: 12px;
}

.tray button {
  width: 32px;
}

.tray .ime {
  font-family: "Open Sans", sans-serif;
  font-size: 17px;
  font-weight: 300;
}

.tray .net {
  gap: 7px;
  width: 54px;
}

.tray .clock {
  display: block;
  width: 72px;
  text-align: right;
}

.tray .copilot {
  position: relative;
  width: 40px;
}

.badge {
  position: absolute;
  bottom: -2px;
  left: 14px;
  padding: 0 2px;
  background: #f7c948;
  border-radius: 3px;
  font-size: 8px;
  font-weight: 700;
  line-height: 8px;
}
```
